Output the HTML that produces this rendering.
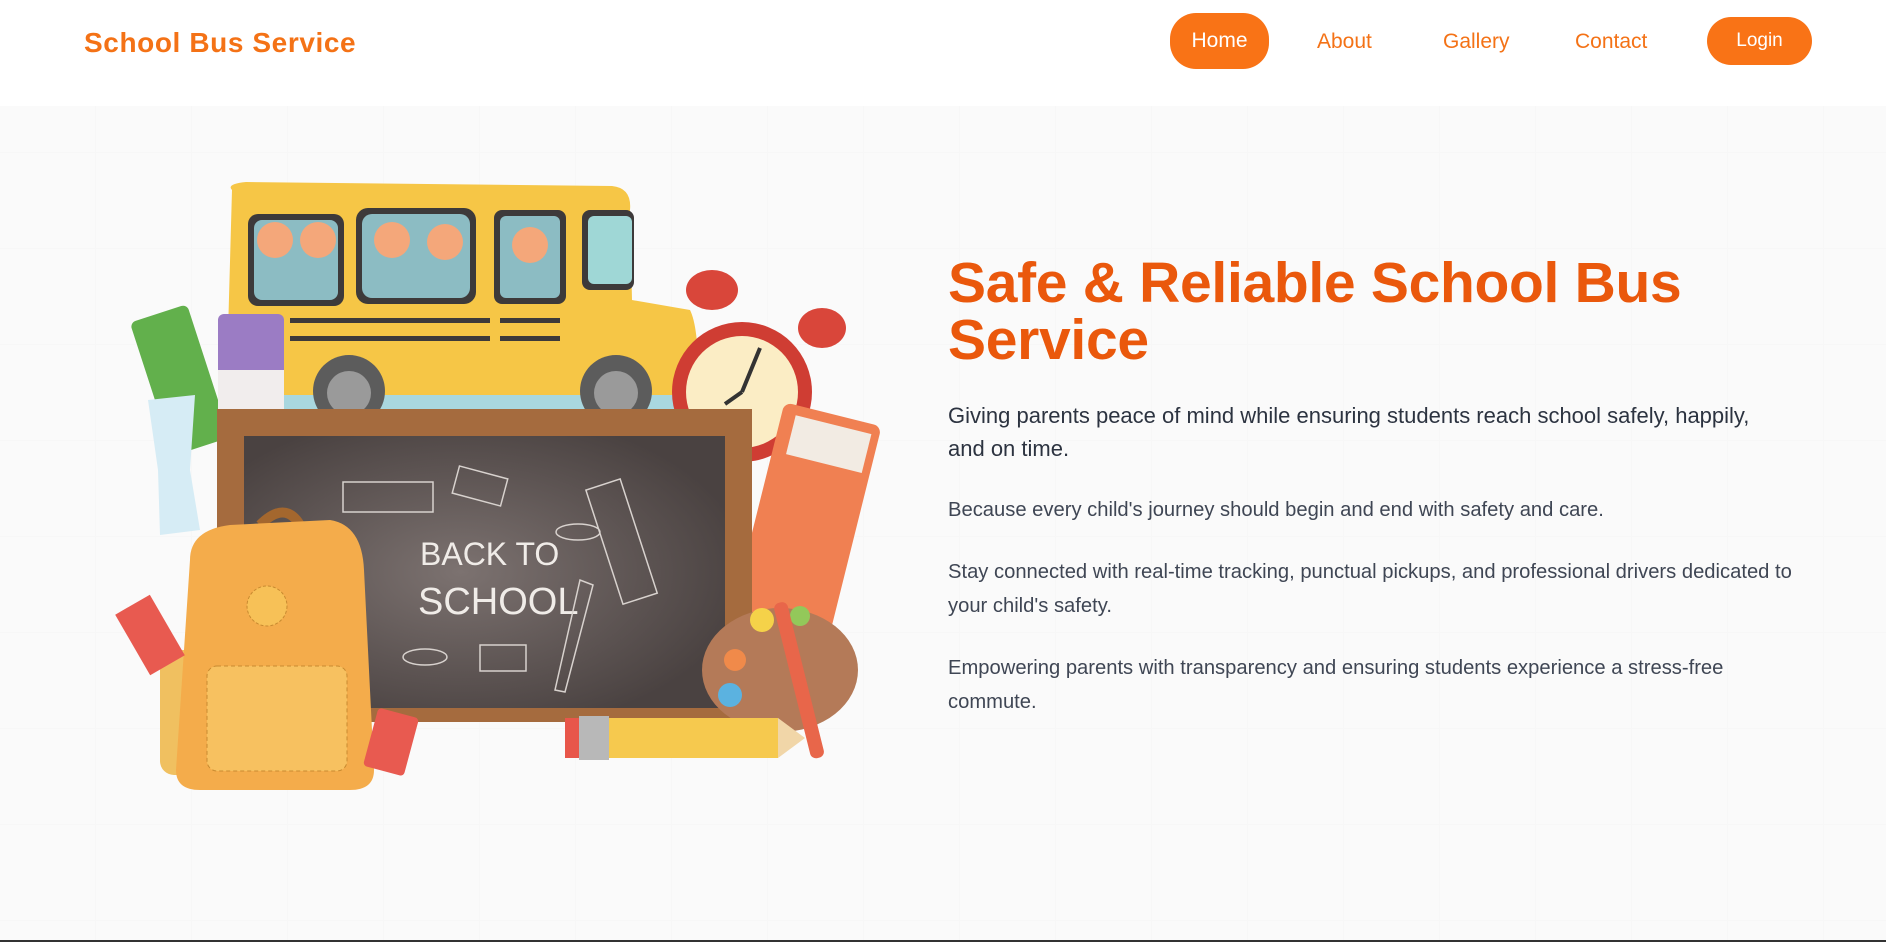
<!DOCTYPE html>
<html><head><meta charset="utf-8"><style>
*{margin:0;padding:0;box-sizing:border-box}
body{width:1886px;height:942px;overflow:hidden;font-family:"Liberation Sans",sans-serif;background:#fafafa;position:relative}
header{position:absolute;left:0;top:0;width:1886px;height:106px;background:#fff}
.logo{position:absolute;left:84px;top:27px;font-size:28px;font-weight:bold;color:#f47216;letter-spacing:0.6px}
.nav a{position:absolute;font-size:21px;color:#f47216;text-decoration:none}
.pill{background:#f97316;color:#fff!important;border-radius:26px;text-align:center}
main{position:absolute;left:0;top:106px;width:1886px;height:834px;
background-image:linear-gradient(#eee 1px,transparent 1px),linear-gradient(90deg,#eee 1px,transparent 1px);background-size:96px 96px;background-position:-1px 46px;}
main::before{content:"";position:absolute;inset:0;background:rgba(250,250,250,0.75)}
.bot{position:absolute;left:0;top:940px;width:1886px;height:2px;background:#333}
h1{position:absolute;left:948px;top:255px;width:860px;font-size:57px;line-height:57px;color:#ea580c;font-weight:900;letter-spacing:-0.3px}
p{position:absolute;left:948px;color:#3f4654;white-space:nowrap}
.lead{top:399px;font-size:22px;line-height:33px;color:#2c3340}
.p{font-size:20.2px;line-height:34px}
svg{position:absolute;left:0;top:0}
</style></head><body>
<header>
<div class="logo">School Bus Service</div>
<div class="nav">
<a class="pill" style="left:1170px;top:13px;width:99px;height:56px;line-height:56px">Home</a>
<a style="left:1317px;top:30px">About</a>
<a style="left:1443px;top:30px">Gallery</a>
<a style="left:1575px;top:30px">Contact</a>
<a class="pill" style="left:1707px;top:17px;width:105px;height:48px;line-height:48px;font-size:19px">Login</a>
</div>
</header>
<main></main>
<svg width="1886" height="942" viewBox="0 0 1886 942">
<rect x="150" y="310" width="60" height="140" rx="6" fill="#62b04c" transform="rotate(-18 180 380)"/>
<path d="M148 400 L195 395 L190 470 L200 530 L160 535 L158 470 Z" fill="#d6ecf5"/>
<path d="M232 190 Q226 184 246 182 L612 186 Q632 188 630 210 L632 300 L690 310 Q700 330 698 400 L226 405 Z" fill="#f6c646"/>
<rect x="248" y="214" width="96" height="92" rx="10" fill="#3d3a3a"/><rect x="254" y="220" width="84" height="80" rx="8" fill="#8cbcc3"/>
<rect x="356" y="208" width="120" height="96" rx="12" fill="#3d3a3a"/><rect x="362" y="214" width="108" height="84" rx="10" fill="#8cbcc3"/>
<rect x="494" y="210" width="72" height="94" rx="8" fill="#3d3a3a"/><rect x="500" y="216" width="60" height="82" rx="6" fill="#8cbcc3"/>
<rect x="582" y="210" width="52" height="80" rx="8" fill="#3d3a3a"/><rect x="588" y="216" width="44" height="68" rx="6" fill="#9fd7d6"/>
<circle cx="275" cy="240" r="18" fill="#f4a77a"/><circle cx="318" cy="240" r="18" fill="#f4a77a"/><circle cx="392" cy="240" r="18" fill="#f4a77a"/><circle cx="445" cy="242" r="18" fill="#f4a77a"/><circle cx="530" cy="245" r="18" fill="#f4a77a"/>
<rect x="290" y="318" width="200" height="5" fill="#3d3a3a"/><rect x="290" y="336" width="200" height="5" fill="#3d3a3a"/>
<rect x="500" y="318" width="60" height="5" fill="#3d3a3a"/><rect x="500" y="336" width="60" height="5" fill="#3d3a3a"/>
<rect x="240" y="395" width="440" height="20" fill="#a9d7df"/>
<circle cx="349" cy="391" r="36" fill="#5c5c5c"/><circle cx="349" cy="393" r="22" fill="#9a9a9a"/>
<circle cx="616" cy="391" r="36" fill="#5c5c5c"/><circle cx="616" cy="393" r="22" fill="#9a9a9a"/>
<rect x="218" y="314" width="66" height="96" rx="6" fill="#9b7cc4"/><rect x="218" y="370" width="66" height="40" fill="#f1eded"/>
<ellipse cx="712" cy="290" rx="26" ry="20" fill="#d9463a"/><ellipse cx="822" cy="328" rx="24" ry="20" fill="#d9463a"/>
<circle cx="742" cy="392" r="70" fill="#cf3d33"/><circle cx="742" cy="392" r="56" fill="#fbedc5"/>
<path d="M742 392 L760 348 M742 392 L725 404" stroke="#333" stroke-width="4"/>
<rect x="748" y="410" width="100" height="290" rx="8" fill="#f08052" transform="rotate(14 798 555)"/>
<rect x="762" y="420" width="78" height="40" fill="#f2ebe3" transform="rotate(14 798 555)"/>
<rect x="217" y="409" width="535" height="313" fill="#a56b3e"/>
<radialGradient id="g" cx="0.45" cy="0.5" r="0.6"><stop offset="0" stop-color="#7c7270"/><stop offset="1" stop-color="#4a4241"/></radialGradient>
<rect x="244" y="436" width="481" height="272" fill="url(#g)"/>
<text x="420" y="565" font-family="Liberation Sans, sans-serif" font-size="32" fill="#f0ece8">BACK TO</text>
<text x="418" y="614" font-family="Liberation Sans, sans-serif" font-size="38" fill="#f0ece8">SCHOOL</text>
<g fill="none" stroke="#d8d2ce" stroke-width="1.5"><rect x="343" y="482" width="90" height="30"/><rect x="455" y="472" width="50" height="28" transform="rotate(15 480 486)"/><rect x="603" y="482" width="36" height="120" transform="rotate(-18 620 540)"/><path d="M580 580 L555 690 L565 692 L593 585 Z"/><rect x="480" y="645" width="46" height="26"/><ellipse cx="425" cy="657" rx="22" ry="8"/><ellipse cx="578" cy="532" rx="22" ry="8"/></g>
<rect x="160" y="650" width="60" height="125" rx="14" fill="#f0c060"/>
<path d="M260 525 Q285 500 300 525" stroke="#a4672e" stroke-width="10" fill="none"/>
<path d="M190 560 Q190 530 230 525 L330 520 Q362 525 364 570 L374 770 Q374 790 350 790 L200 790 Q176 790 176 770 Z" fill="#f4ac4b"/>
<circle cx="267" cy="606" r="20" fill="#f7c157" stroke="#c88a30" stroke-dasharray="3 2"/>
<rect x="207" y="666" width="140" height="105" rx="10" fill="#f7c160" stroke="#c88a30" stroke-dasharray="4 3"/>
<rect x="130" y="600" width="40" height="70" fill="#e85a50" transform="rotate(-30 150 635)"/>
<rect x="370" y="712" width="42" height="60" rx="4" fill="#e85a50" transform="rotate(15 391 742)"/>
<ellipse cx="780" cy="670" rx="78" ry="62" fill="#b47a58"/>
<circle cx="762" cy="620" r="12" fill="#f5d249"/><circle cx="735" cy="660" r="11" fill="#f08a4a"/><circle cx="730" cy="695" r="12" fill="#5bb2e0"/><circle cx="800" cy="616" r="10" fill="#93c85a"/>
<rect x="792" y="600" width="14" height="160" rx="6" fill="#e8664a" transform="rotate(-14 800 680)"/>
<rect x="578" y="718" width="200" height="40" fill="#f6c94e"/><rect x="565" y="718" width="14" height="40" fill="#e8564a"/><rect x="579" y="716" width="30" height="44" fill="#b8b8b8"/>
<path d="M778 718 L805 738 L778 758 Z" fill="#f1d6a8"/>
</svg>
<h1>Safe &amp; Reliable School Bus Service</h1>
<p class="lead">Giving parents peace of mind while ensuring students reach school safely, happily,<br>and on time.</p>
<p class="p" style="top:493px">Because every child's journey should begin and end with safety and care.</p>
<p class="p" style="top:555px">Stay connected with real-time tracking, punctual pickups, and professional drivers dedicated to<br>your child's safety.</p>
<p class="p" style="top:651px">Empowering parents with transparency and ensuring students experience a stress-free<br>commute.</p>
<div class="bot"></div>
</body></html>
